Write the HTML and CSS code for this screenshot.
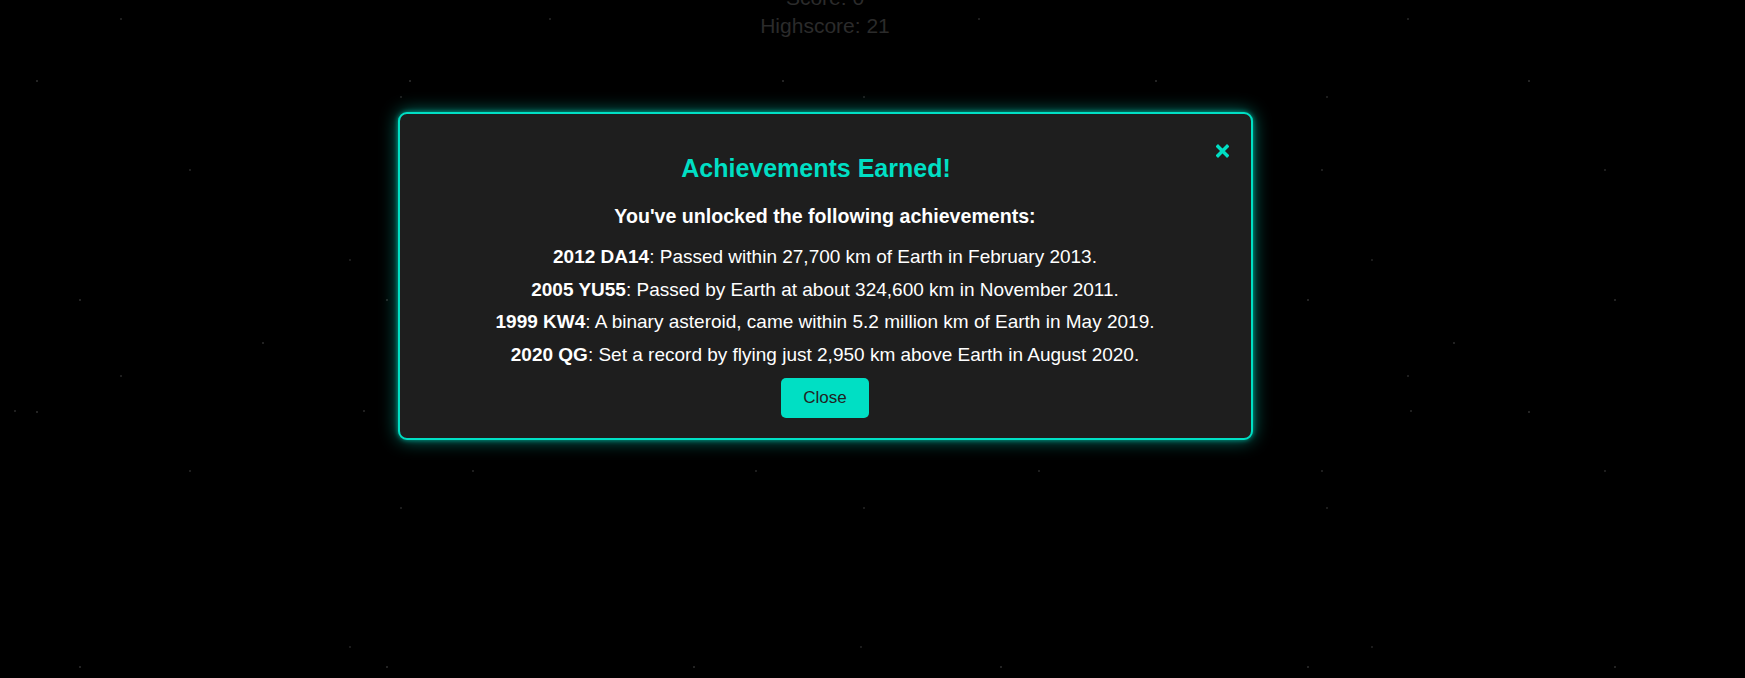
FILE: index.html
```html
<!DOCTYPE html>
<html lang="en">
<head>
<meta charset="utf-8">
<title>Achievements</title>
<link rel="stylesheet" href="styles.css">
</head>
<body>
<div class="stage">
  <div class="hud">
    <div class="hud-line">Score: 0</div>
    <div class="hud-line">Highscore: 21</div>
  </div>
  <div class="modal">
    <span class="close-x" aria-label="close">
      <svg width="13" height="14" viewBox="0 0 13 14"><path d="M2 2.5 L11 11.5 M11 2.5 L2 11.5" stroke="#00dfc4" stroke-width="3.4" stroke-linecap="square" fill="none"/></svg>
    </span>
    <h2 class="modal-title">Achievements Earned!</h2>
    <p class="modal-sub">You've unlocked the following achievements:</p>
    <div class="ach-list">
      <p class="ach"><strong>2012 DA14</strong>: Passed within 27,700 km of Earth in February 2013.</p>
      <p class="ach"><strong>2005 YU55</strong>: Passed by Earth at about 324,600 km in November 2011.</p>
      <p class="ach"><strong>1999 KW4</strong>: A binary asteroid, came within 5.2 million km of Earth in May 2019.</p>
      <p class="ach"><strong>2020 QG</strong>: Set a record by flying just 2,950 km above Earth in August 2020.</p>
    </div>
    <button class="close-btn">Close</button>
  </div>
</div>
</body>
</html>
```
FILE: styles.css
```css
html, body {
  margin: 0;
  padding: 0;
}
body {
  width: 1745px;
  height: 678px;
  overflow: hidden;
  background-color: #000;
  background-image:
    radial-gradient(circle at 37px 81px, #2e2e2e 0.6px, transparent 1.1px),
    radial-gradient(circle at 121px 19px, #262626 0.6px, transparent 1.1px),
    radial-gradient(circle at 263px 343px, #2a2a2a 0.6px, transparent 1.1px),
    radial-gradient(circle at 401px 97px, #242424 0.6px, transparent 1.1px),
    radial-gradient(circle at 15px 411px, #282828 0.6px, transparent 1.1px),
    radial-gradient(circle at 350px 260px, #222 0.6px, transparent 1.1px),
    radial-gradient(circle at 190px 170px, #262626 0.6px, transparent 1.1px),
    radial-gradient(circle at 80px 300px, #2c2c2c 0.6px, transparent 1.1px);
  background-size: 373px 331px, 429px 357px, 397px 473px, 463px 411px, 349px 441px, 511px 387px, 283px 301px, 307px 367px;
  font-family: "Liberation Sans", Arial, sans-serif;
}
.stage {
  width: 1650px;
}
.hud {
  margin-top: -16px;
  text-align: center;
  color: #2b2b2b;
  font-size: 21px;
  line-height: 28px;
}
.modal {
  box-sizing: border-box;
  width: 855px;
  margin: 72px auto 0;
  padding: 20px;
  background: #1e1e1e;
  border: 2px solid #00dfc4;
  border-radius: 9px;
  box-shadow: 0 0 18px rgba(0, 223, 196, 0.55), 0 0 5px rgba(0, 223, 196, 0.6);
  text-align: center;
  color: #fff;
}
.close-x {
  float: right;
  width: 18px;
  padding-top: 10px;
  text-align: left;
}
.close-x svg {
  display: block;
  margin-left: 3px;
}
.modal-title {
  margin: 20px 0 0;
  font-size: 25px;
  line-height: 29px;
  font-weight: bold;
  color: #00dfc4;
}
.modal-sub {
  margin: 22px 0 0;
  font-size: 19.6px;
  line-height: 23px;
  font-weight: bold;
}
.ach-list {
  margin-top: 13px;
}
.ach {
  margin: 0;
  font-size: 19px;
  line-height: 32.7px;
}
.close-btn {
  display: block;
  margin: 6px auto 0;
  padding: 10px 22px;
  border: none;
  border-radius: 5px;
  background: #00dfc4;
  color: #222;
  font-family: "Liberation Sans", Arial, sans-serif;
  font-size: 17px;
  line-height: 20px;
  cursor: pointer;
}
```
